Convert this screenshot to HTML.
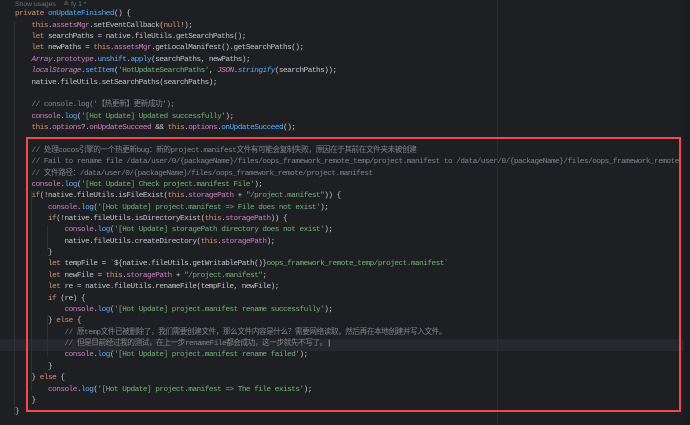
<!DOCTYPE html>
<html><head><meta charset="utf-8"><style>
html,body{margin:0;padding:0;width:690px;height:425px;overflow:hidden;background:#1e1f22;}
.wrap{position:absolute;left:0;top:0;width:684px;height:425px;overflow:hidden;}
.l{position:absolute;left:15px;white-space:pre;font-family:"Liberation Mono","Noto Sans CJK SC",monospace;font-size:7.7px;letter-spacing:-0.49px;line-height:11.37px;height:11.37px;color:#c4c6cc;}
.k{color:#d6936f}.p{color:#cc80c0}.f{color:#5aacf8}.s{color:#70b378}.c{color:#80848b}.i{color:#cc80c0;font-style:italic}.fi{color:#5aacf8;font-style:italic}
.g{position:absolute;width:1px;background:#2b2d30;}
</style></head><body>
<div style="position:absolute;left:0;top:339px;width:690px;height:12px;background:#26282e"></div>
<div class="g" style="left:497px;top:0;height:425px;background:#2b2d30"></div>
<div class="g" style="left:14px;top:21px;height:393px;background:#2e3034"></div>
<div class="g" style="left:31px;top:191px;height:200px;background:#2e3034"></div>
<div class="g" style="left:47px;top:225px;height:25px;background:#2e3034"></div>
<div class="g" style="left:47px;top:316px;height:40px;background:#2e3034"></div>
<div style="position:absolute;left:684px;top:0;width:6px;height:425px;background:#1b1c1f"></div>
<div class="wrap">
<div class="l" style="top:-1px;left:15px;color:#6f737a;font-family:'Liberation Sans',sans-serif;font-size:6.8px;letter-spacing:0">Show usages&nbsp;&nbsp;&nbsp;&nbsp;≗ fy 1 *</div>
<div class="l" style="top:9.3px"><span class="k">private</span> <span class="f">onUpdateFinished</span>() {</div>
<div class="l" style="top:20.7px;left:31.5px"><span class="k">this</span>.<span class="p">assetsMgr</span>.setEventCallback(<span class="k">null</span>!);</div>
<div class="l" style="top:32.0px;left:31.5px"><span class="k">let</span> searchPaths = native.fileUtils.getSearchPaths();</div>
<div class="l" style="top:43.4px;left:31.5px"><span class="k">let</span> newPaths = <span class="k">this</span>.<span class="p">assetsMgr</span>.getLocalManifest().getSearchPaths();</div>
<div class="l" style="top:54.8px;left:31.5px"><span class="i">Array</span>.<span class="p">prototype</span>.<span class="f">unshift</span>.<span class="f">apply</span>(searchPaths, newPaths);</div>
<div class="l" style="top:66.2px;left:31.5px"><span class="i">localStorage</span>.<span class="f">setItem</span>(<span class="s">'HotUpdateSearchPaths'</span>, <span class="i">JSON</span>.<span class="fi">stringify</span>(searchPaths));</div>
<div class="l" style="top:77.5px;left:31.5px">native.fileUtils.setSearchPaths(searchPaths);</div>
<div class="l c" style="top:100.3px;left:31.5px">// console.log('【热更新】更新成功');</div>
<div class="l" style="top:111.7px;left:31.5px"><span class="p">console</span>.<span class="f">log</span>(<span class="s">'[Hot Update] Updated successfully'</span>);</div>
<div class="l" style="top:123.0px;left:31.5px"><span class="k">this</span>.<span class="p">options</span>?.<span class="p">onUpdateSucceed</span> &amp;&amp; <span class="k">this</span>.<span class="p">options</span>.<span class="f">onUpdateSucceed</span>();</div>
<div class="l c" style="top:145.7px;left:31.5px">// 处理cocos引擎的一个热更新bug：新的project.manifest文件有可能会复制失败，原因在于其前在文件夹未被创建</div>
<div class="l c" style="top:157.1px;left:31.5px">// Fail to rename file /data/user/0/{packageName}/files/oops_framework_remote_temp/project.manifest to /data/user/0/{packageName}/files/oops_framework_remote</div>
<div class="l c" style="top:168.5px;left:31.5px">// 文件路径：/data/user/0/{packageName}/files/oops_framework_remote/project.manifest</div>
<div class="l" style="top:179.8px;left:31.5px"><span class="p">console</span>.<span class="f">log</span>(<span class="s">'[Hot Update] Check project.manifest File'</span>);</div>
<div class="l" style="top:191.2px;left:31.5px"><span class="k">if</span>(!native.fileUtils.isFileExist(<span class="k">this</span>.<span class="p">storagePath</span> + <span class="s">"/project.manifest"</span>)) {</div>
<div class="l" style="top:202.6px;left:48px"><span class="p">console</span>.<span class="f">log</span>(<span class="s">'[Hot Update] project.manifest =&gt; File does not exist'</span>);</div>
<div class="l" style="top:213.9px;left:48px"><span class="k">if</span>(!native.fileUtils.isDirectoryExist(<span class="k">this</span>.<span class="p">storagePath</span>)) {</div>
<div class="l" style="top:225.3px;left:64.5px"><span class="p">console</span>.<span class="f">log</span>(<span class="s">'[Hot Update] storagePath directory does not exist'</span>);</div>
<div class="l" style="top:236.7px;left:64.5px">native.fileUtils.createDirectory(<span class="k">this</span>.<span class="p">storagePath</span>);</div>
<div class="l" style="top:248.1px;left:48px">}</div>
<div class="l" style="top:259.4px;left:48px"><span class="k">let</span> tempFile = <span class="s">`</span>${native.fileUtils.getWritablePath()}<span class="s">oops_framework_remote_temp/project.manifest`</span></div>
<div class="l" style="top:270.8px;left:48px"><span class="k">let</span> newFile = <span class="k">this</span>.<span class="p">storagePath</span> + <span class="s">"/project.manifest"</span>;</div>
<div class="l" style="top:282.2px;left:48px"><span class="k">let</span> re = native.fileUtils.renameFile(tempFile, newFile);</div>
<div class="l" style="top:293.6px;left:48px"><span class="k">if</span> (re) {</div>
<div class="l" style="top:304.9px;left:64.5px"><span class="p">console</span>.<span class="f">log</span>(<span class="s">'[Hot Update] project.manifest rename successfully'</span>);</div>
<div class="l" style="top:316.3px;left:48px">} <span class="k">else</span> {</div>
<div class="l c" style="top:327.7px;left:64.5px">// 原temp文件已被删除了，我们需要创建文件，那么文件内容是什么？需要网络读取，然后再在本地创建并写入文件。</div>
<div class="l c" style="top:339.0px;left:64.5px">// 但是目前经过我的测试，在上一步renameFile都会成功，这一步就先不写了。<span style="color:#ced0d6">|</span></div>
<div class="l" style="top:350.4px;left:64.5px"><span class="p">console</span>.<span class="f">log</span>(<span class="s">'[Hot Update] project.manifest rename failed'</span>);</div>
<div class="l" style="top:361.8px;left:48px">}</div>
<div class="l" style="top:373.2px;left:31.5px">} <span class="k">else</span> {</div>
<div class="l" style="top:384.5px;left:48px"><span class="p">console</span>.<span class="f">log</span>(<span class="s">'[Hot Update] project.manifest =&gt; The file exists'</span>);</div>
<div class="l" style="top:395.9px;left:31.5px">}</div>
<div class="l" style="top:407.3px;left:15px">}</div>
</div>
<div style="position:absolute;left:26px;top:137px;width:651px;height:271px;border:2px solid #f04a4a;"></div>
</body></html>
